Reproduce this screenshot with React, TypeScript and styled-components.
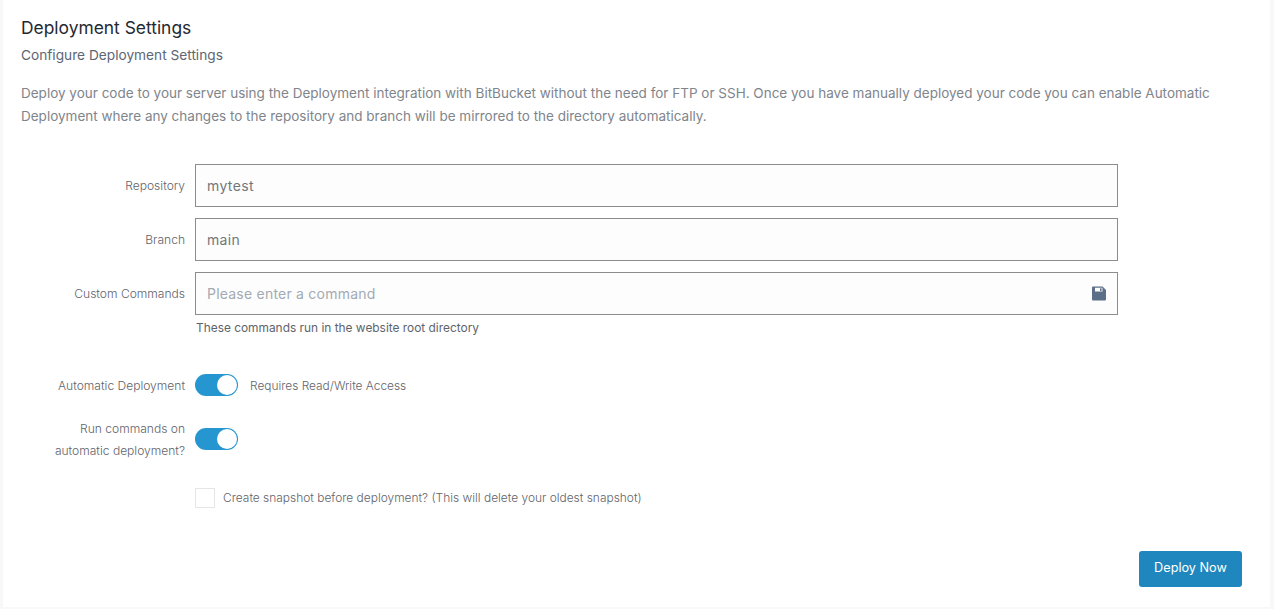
import React from "react";
import styled, { createGlobalStyle } from "styled-components";

const GlobalStyle = createGlobalStyle`
  html, body {
    margin: 0;
    padding: 0;
    height: 609px;
    overflow: hidden;
    background: #f8f8f8;
    font-family: "Inter", "Liberation Sans", sans-serif;
  }
`;

const SaveIcon = () => (
  <svg width="14" height="15" viewBox="0 0 14 15" aria-hidden="true">
    <path
      fill="#5c6f88"
      fillRule="evenodd"
      d="M1.2 0.5H10.6L14 3.9V13.3C14 14 13.4 14.6 12.8 14.6H1.2C0.5 14.6 0 14 0 13.3V1.7C0 1 0.5 0.5 1.2 0.5ZM3 1.8V5.4H10.5V1.8Z"
    />
    <rect x="8" y="2.3" width="1.6" height="2.6" fill="#5c6f88" />
  </svg>
);

export default function App() {
  return (
    <>
      <GlobalStyle />
      <Card>
        <Title>Deployment Settings</Title>
        <Subtitle>Configure Deployment Settings</Subtitle>
        <Intro>
          Deploy your code to your server using the Deployment integration with BitBucket without the
          need for FTP or SSH. Once you have manually deployed your code you can enable Automatic
          Deployment where any changes to the repository and branch will be mirrored to the directory
          automatically.
        </Intro>

        <Form>
          <FieldRow>
            <Label>Repository</Label>
            <InputBox>
              <Value>mytest</Value>
            </InputBox>
          </FieldRow>
          <FieldRow>
            <Label>Branch</Label>
            <InputBox>
              <Value>main</Value>
            </InputBox>
          </FieldRow>
          <FieldRow>
            <Label>Custom Commands</Label>
            <InputBox>
              <Value $placeholder>Please enter a command</Value>
              <SaveIcon />
            </InputBox>
          </FieldRow>
          <Help>These commands run in the website root directory</Help>

          <ToggleRow>
            <ToggleLabel>Automatic Deployment</ToggleLabel>
            <Toggle />
            <ToggleNote>Requires Read/Write Access</ToggleNote>
          </ToggleRow>
          <TallToggleRow>
            <ToggleLabel>
              Run commands on
              <br />
              automatic deployment?
            </ToggleLabel>
            <Toggle />
          </TallToggleRow>
          <CheckRow>
            <Checkbox />
            <CheckText>Create snapshot before deployment? (This will delete your oldest snapshot)</CheckText>
          </CheckRow>
        </Form>

        <Footer>
          <DeployButton>Deploy Now</DeployButton>
        </Footer>
      </Card>
    </>
  );
}

const Card = styled.div`
  box-sizing: border-box;
  width: 1267px;
  height: 607px;
  margin-left: 3px;
  padding: 18px 0 0 18px;
  background: #fff;
`;

const Title = styled.h1`
  margin: 0;
  font-size: 17.4px;
  line-height: 20px;
  font-weight: 400;
  color: #1f2933;
`;

const Subtitle = styled.p`
  margin: 7px 0 0;
  font-size: 13.7px;
  line-height: 20px;
  color: #5d6673;
`;

const Intro = styled.p`
  width: 1215px;
  margin: 17px 0 0;
  font-size: 13.5px;
  line-height: 23px;
  color: #80858c;
`;

const Form = styled.div`
  margin-top: 36px;
`;

const FieldRow = styled.div`
  display: flex;
  align-items: center;
  gap: 10px;
  margin-bottom: 11px;
`;

const Label = styled.div`
  flex: none;
  width: 164px;
  font-size: 12.05px;
  font-weight: 300;
  line-height: 22px;
  text-align: right;
  color: #5f646b;
`;

const ToggleLabel = styled(Label)`
  padding-top: 2px;
`;

const InputBox = styled.div`
  box-sizing: border-box;
  display: flex;
  align-items: center;
  justify-content: space-between;
  width: 923px;
  height: 43px;
  padding: 0 11px;
  border: 1px solid #8c8c8c;
  background: #fdfdfd;
`;

const Value = styled.span<{ $placeholder?: boolean }>`
  font-size: 14px;
  letter-spacing: ${(p) => (p.$placeholder ? "0.22px" : "0.35px")};
  color: ${(p) => (p.$placeholder ? "#a3aab3" : "#72777c")};
`;

const Help = styled.div`
  margin: -8px 0 0 175px;
  font-size: 11.9px;
  line-height: 20px;
  color: #5e646b;
`;

const ToggleRow = styled.div`
  display: flex;
  align-items: center;
  gap: 10px;
  margin-top: 35px;
`;

const TallToggleRow = styled(ToggleRow)`
  margin-top: 19px;
`;

const Toggle = styled.span`
  position: relative;
  flex: none;
  width: 43px;
  height: 22px;
  border-radius: 11px;
  background: #2596cf;

  &::after {
    content: "";
    position: absolute;
    top: 1px;
    right: 1px;
    width: 20px;
    height: 20px;
    border-radius: 50%;
    background: #fff;
  }
`;

const ToggleNote = styled.span`
  margin-left: 2px;
  font-size: 11.9px;
  font-weight: 300;
  color: #5f646b;
`;

const CheckRow = styled.div`
  display: flex;
  align-items: center;
  gap: 8px;
  margin: 26px 0 0 174px;
`;

const Checkbox = styled.span`
  box-sizing: border-box;
  flex: none;
  width: 20px;
  height: 20px;
  border: 1px solid #e6e6e6;
  background: #fff;
`;

const CheckText = styled.span`
  padding-bottom: 2px;
  font-size: 11.95px;
  font-weight: 300;
  color: #5f646b;
`;

const Footer = styled.div`
  display: flex;
  justify-content: flex-end;
  margin: 43px 28px 0 0;
`;

const DeployButton = styled.button`
  width: 103px;
  height: 36px;
  padding: 0 0 3px;
  border: none;
  border-radius: 3px;
  background: #1f87bd;
  color: #fff;
  font-family: inherit;
  font-size: 12.7px;
  font-weight: 400;
`;
